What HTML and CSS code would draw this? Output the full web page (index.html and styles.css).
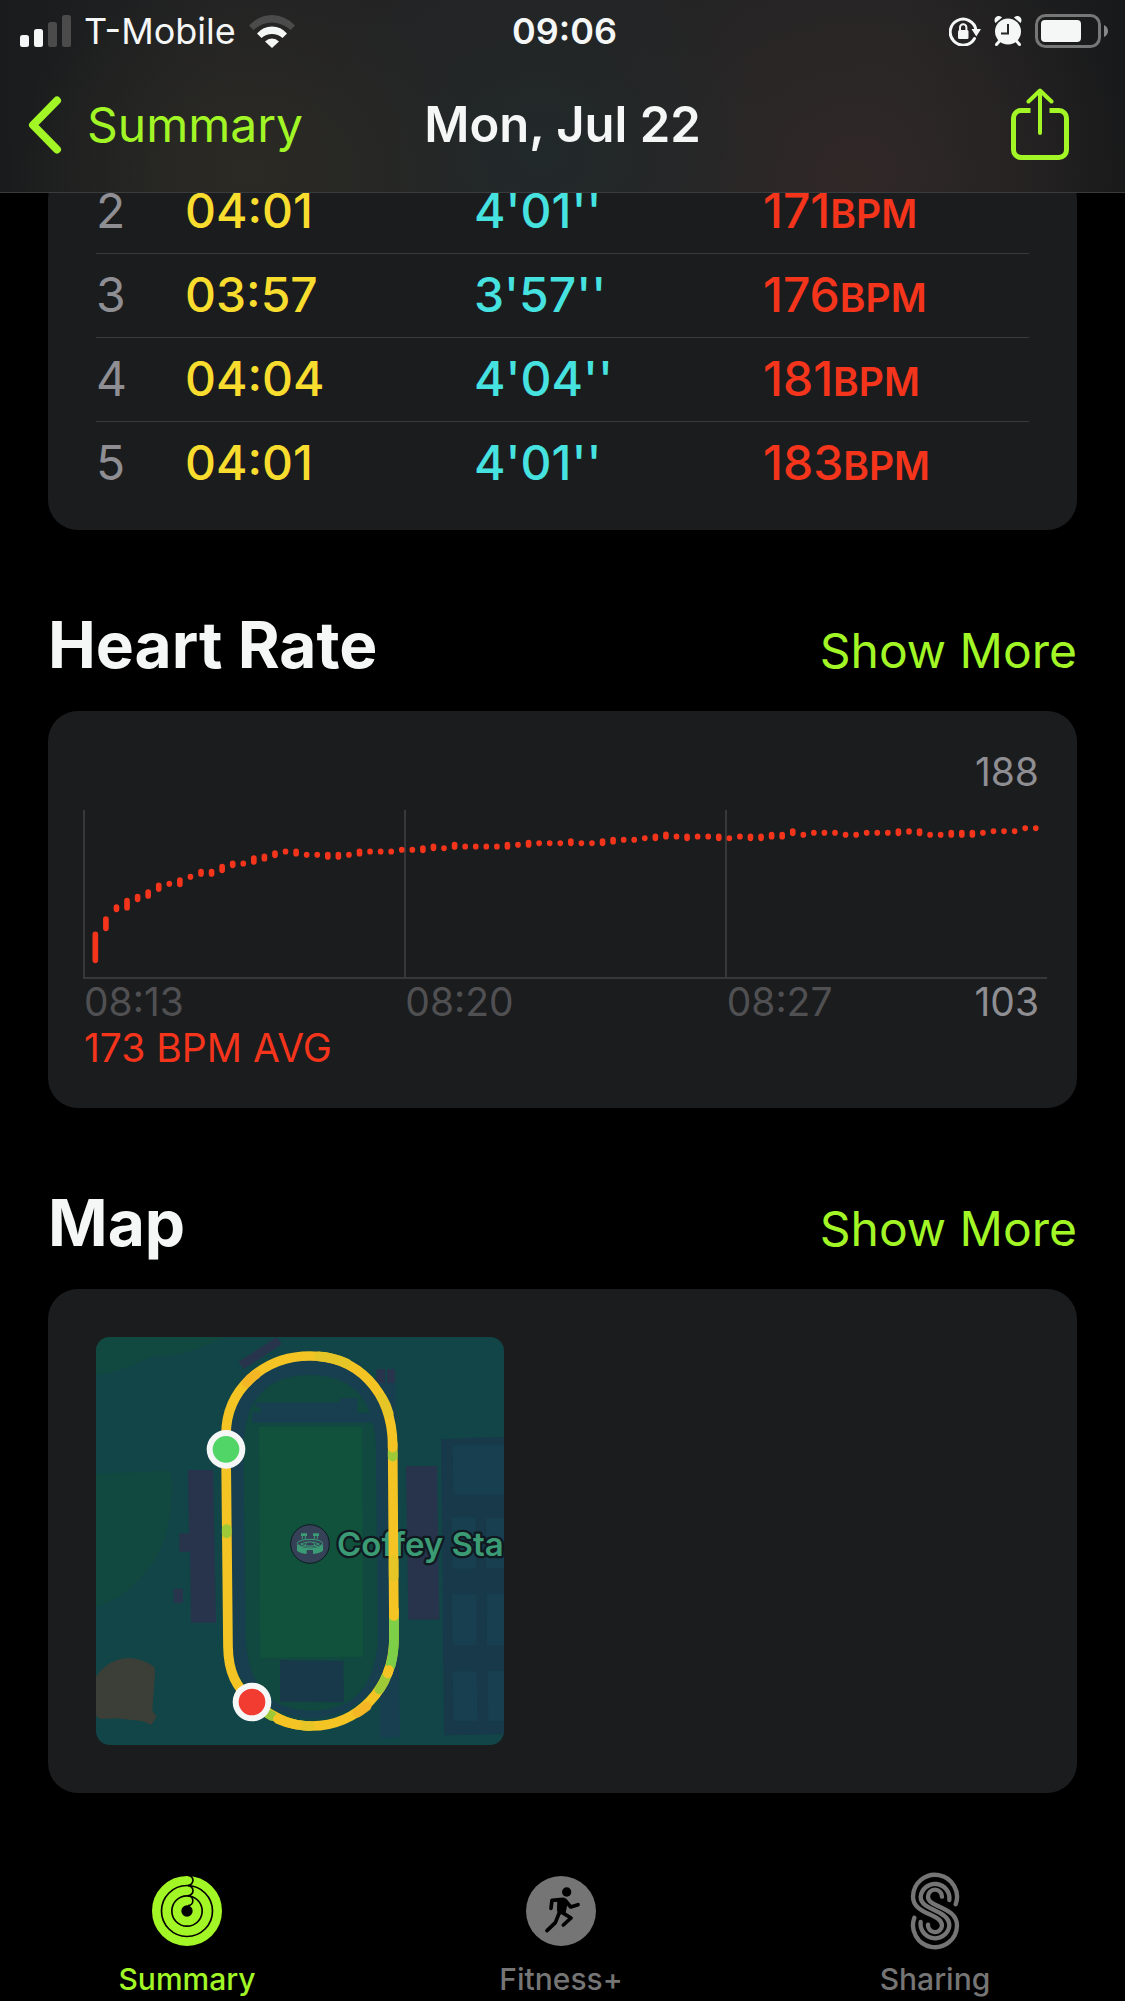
FILE: index.html
```html
<!DOCTYPE html>
<html lang="en">
<head>
<meta charset="utf-8">
<meta name="viewport" content="width=device-width, initial-scale=1">
<title>Mon, Jul 22</title>
<link rel="stylesheet" href="styles.css">
</head>
<body>
<header class="top">
  <div class="status">
    <div class="status-side">
      <svg class="signal" viewBox="0 0 51 32" aria-hidden="true">
        <rect x="0" y="20" width="9" height="12" rx="2.5"/>
        <rect x="14" y="14" width="9" height="18" rx="2.5"/>
        <rect class="faint" x="28" y="7" width="9" height="25" rx="2.5"/>
        <rect class="faint" x="42" y="0" width="9" height="32" rx="2.5"/>
      </svg>
      <span class="carrier">T-Mobile</span>
      <svg class="wifi" viewBox="0 0 46 33" aria-hidden="true">
        <path class="faint" d="M0 10.5Q10 0 23 0T46 10.500L41.500 15Q33 7.500 23 7.500T4.500 15Z"/>
        <path d="M8 18.500Q14 11.500 23 11.500T38 18.500L33.500 23Q29 19 23 19T12.500 23Z"/>
        <path d="M16 26.500Q19 23.500 23 23.500T30 26.500L23 33Z"/>
      </svg>
    </div>
    <time class="clock">09:06</time>
    <div class="status-side status-end">
      <svg class="lock" viewBox="0 0 32 30" aria-hidden="true">
        <path class="line" d="M25.500 22.500A13 13 0 1 1 27 14"/>
        <path d="M22.500 13H32L27.300 20.500Z"/>
        <rect x="9" y="14" width="10.500" height="9" rx="1.500"/>
        <path class="shackle" d="M11 15V11.500a3.200 3.200 0 0 1 6.400 0V15"/>
      </svg>
      <svg class="alarm" viewBox="0 0 28 30" aria-hidden="true">
        <circle cx="14" cy="15.500" r="13"/>
        <path class="leg" d="M5.500 25L2.500 28.500M22.500 25l3 3.500"/>
        <path d="M1.500 7A4 4 0 0 1 8 1.500ZM26.500 7A4 4 0 0 0 20 1.500Z"/>
        <path class="hand" d="M14 8V17.500H7"/>
      </svg>
      <svg class="battery" viewBox="0 0 74 34" aria-hidden="true">
        <rect class="case" x="1.500" y="1.500" width="63" height="31" rx="9"/>
        <rect x="6" y="6" width="40" height="22" rx="4"/>
        <path class="nub" d="M69 11q4 2 4 6t-4 6z"/>
      </svg>
    </div>
  </div>
  <div class="nav">
    <a class="back" href="#summary">
      <svg class="chevron" viewBox="0 0 34 58" aria-hidden="true"><path d="M29 4.500L5 29L29 53.500"/></svg>
      Summary
    </a>
    <h1 class="title">Mon, Jul 22</h1>
    <button class="share" type="button" aria-label="Share">
      <svg viewBox="0 0 58 72" aria-hidden="true"><path d="M19.500 22.500H10a7.500 7.500 0 0 0-7.500 7.500v32a7.500 7.500 0 0 0 7.500 7.500h38a7.500 7.500 0 0 0 7.500-7.500V30a7.500 7.500 0 0 0-7.500-7.500H38.500"/><path class="arrow" d="M29 45V3M17.500 13.500L29 2.500L40.500 13.500"/></svg>
    </button>
  </div>
</header>

<main class="content">
  <section class="card splits">
    <table aria-label="Splits">
      <colgroup><col class="col-index"><col class="col-value"><col class="col-value"><col></colgroup>
      <tbody>
        <tr><th scope="row">2</th><td class="time">04:01</td><td class="pace">4'01''</td><td class="rate">171<span class="unit">BPM</span></td></tr>
        <tr><th scope="row">3</th><td class="time">03:57</td><td class="pace">3'57''</td><td class="rate">176<span class="unit">BPM</span></td></tr>
        <tr><th scope="row">4</th><td class="time">04:04</td><td class="pace">4'04''</td><td class="rate">181<span class="unit">BPM</span></td></tr>
        <tr><th scope="row">5</th><td class="time">04:01</td><td class="pace">4'01''</td><td class="rate">183<span class="unit">BPM</span></td></tr>
      </tbody>
    </table>
  </section>

  <section>
    <div class="section-head">
      <h2>Heart Rate</h2>
      <a href="#heart-rate">Show More</a>
    </div>
    <div class="card heart">
      <p class="max">188</p>
      <svg class="chart" viewBox="0 0 2892 507" role="img" aria-label="Heart rate">
        <path class="grid" d="M3 0V504M966 0V504M1929 0V504M0 504H2892"/>
        <path class="beats" id="beats"/>
      </svg>
      <div class="axis">
        <span>08:13</span>
        <span>08:20</span>
        <span>08:27</span>
        <span class="min">103</span>
      </div>
      <p class="average">173 BPM AVG</p>
    </div>
  </section>

  <section>
    <div class="section-head">
      <h2>Map</h2>
      <a href="#map">Show More</a>
    </div>
    <div class="card map-card">
      <svg class="map" viewBox="48 51 1224 1224" role="img" aria-label="Route map">
        <rect x="48" y="51" width="1224" height="1224" fill="#114547"/>
        <path fill="#11483f" d="M48 51H430Q350 95 270 107H220Q140 150 48 167ZM48 461L272 452Q285 600 235 700Q170 820 48 862Z"/>
        <path fill="#3c3f37" d="M48 1070Q85 1015 150 1014Q195 1018 223 1042Q227 1055 224 1070L217 1172L230 1190L213 1215L190 1204L110 1195L65 1197Q52 1195 48 1185Z"/>
        <path fill="#17394a" d="M1083 358L1272 350V1243L1092 1246Z"/>
        <path fill="#173f50" d="M1118 376H1272V524H1120ZM1114 592H1187L1188 746H1118ZM1218 594H1272V745H1219ZM1115 823H1190V975H1118ZM1220 821H1272V975H1221ZM1118 1054H1190L1192 1203H1121ZM1223 1052H1272V1203H1225Z"/>
        <path fill="#173f50" d="M895 188H947V400H895ZM900 1000H956L960 1252H900Z"/>
        <path fill="#173f50" d="M438 375A250 262 0 0 1 938 375L942 955A250 262 0 0 1 444 955Z"/>
        <path fill="#11483f" d="M490 400Q488 165 689 165Q888 165 888 400L894 960Q880 1172 695 1172Q510 1172 497 960Z"/>
        <path fill="#173f50" d="M526 248H779V234H832V278H885V308H516V277H542V261H526Z"/>
        <path fill="#11523c" d="M537 321H846L850 1010L541 1013Z"/>
        <path fill="#17394a" d="M600 1020L790 1023L792 1147L600 1145Z"/>
        <path fill="#27344b" d="M475 126L590 51L606 72L492 147ZM889 147H915V189H889ZM921 147H945V189H921ZM324 450H399L408 908H333L330 695H298V640H327ZM280 806H309V849H282ZM978 438H1071L1078 899H985Z"/>
        <circle cx="690" cy="672" r="58" fill="#344157" stroke="#111a22" stroke-width="3"/>
        <g fill="#3b9b74">
          <path d="M663 640H681V648H663ZM699 640H717V648H699Z"/>
          <path d="M651 673V692Q658 699 680 702V690H699V702Q722 699 729 692V673Q715 685 690 685T651 673Z"/>
        </g>
        <g fill="none" stroke="#3b9b74" stroke-width="3">
          <path d="M667 648V658M676 648V658M703 648V658M712 648V658"/>
          <ellipse cx="690" cy="670" rx="38" ry="12"/>
          <path d="M662 672Q690 659 718 672M662 672Q690 685 718 672M680 666L674 679M700 666L706 679"/>
        </g>
        <text class="place" x="771" y="709">Coffey Stadium</text>
        <g class="route">
          <path d="M438 388V345C438 210 550 108 690 108C830 108 936 210 938 375L942 950C942 1110 830 1218 695 1218C640 1218 600 1206 516 1146C470 1100 445 1060 444 980L438 388"/>
          <path stroke="#e6c526" d="M716 109Q760 112 800 130M905 232Q920 255 926 280M941 720V770M659 1215Q680 1219 690 1218"/>
          <path stroke="#f4b624" d="M500 188Q510 175 528 163M832 1178Q845 1171 860 1159"/>
          <path stroke="#9fca38" d="M938 397V410M440 627V640M898 1108Q912 1090 918 1070M562 1180L576 1188"/>
          <path stroke="#7dcf47" d="M942 900V950Q942 1000 932 1036"/>
          <path d="M938 370V383M942 870V888M923 1060L926 1050M594 1197Q620 1209 650 1214"/>
        </g>
        <g stroke="#f5f6f6" stroke-width="18">
          <circle cx="438" cy="388" r="49" fill="#51d566"/>
          <circle cx="516" cy="1146" r="49" fill="#f23b31"/>
        </g>
      </svg>
    </div>
  </section>
</main>

<nav class="tabs" aria-label="Tabs">
  <a class="tab active" href="#summary">
    <svg viewBox="173 63 234 234" aria-hidden="true">
      <g fill="none" stroke="currentColor" stroke-width="26">
        <circle cx="290" cy="180" r="92"/>
        <circle cx="290" cy="180" r="61"/>
        <circle cx="290" cy="180" r="30"/>
      </g>
      <path fill="none" stroke="#000" stroke-width="5" d="M293 73a14 14 0 0 1 0 30M293 104a14 14 0 0 1 0 30M293 135a14 14 0 0 1 0 29"/>
    </svg>
    Summary
  </a>
  <a class="tab" href="#fitness">
    <svg viewBox="126 63 234 234" aria-hidden="true">
      <circle cx="243" cy="180" r="105" fill="currentColor"/>
      <circle cx="260" cy="123" r="14"/>
      <path d="M232 141H255L264 152L257 185L238 191L231 179Z"/>
      <g fill="none" stroke="#000" stroke-width="11" stroke-linecap="round" stroke-linejoin="round">
        <path d="M250 145L216 148L213 172M256 148L272 168L294 161M240 180L226 215L201 239M246 184L273 201L250 222"/>
      </g>
    </svg>
    Fitness+
  </a>
  <a class="tab" href="#sharing">
    <svg viewBox="112 64 234 234" aria-hidden="true">
      <g fill="none" stroke="currentColor" stroke-width="13" stroke-linecap="round">
        <path d="M291 161A66 66 0 1 0 163 138C163 192 250 188 250 225A21 21 0 1 1 208 222"/>
        <path d="M272 148A43 43 0 1 0 186 138C186 182 272 176 272 225A43 43 0 1 1 186 214"/>
        <path d="M250 138A21 21 0 1 0 208 138C208 172 295 166 295 225A66 66 0 1 1 167 201"/>
      </g>
    </svg>
    Sharing
  </a>
</nav>
<script src="chart.js"></script>
</body>
</html>
```
FILE: chart.js
```js
// Each sample is [top, bottom] of its bar in chart units.
const samples = [
  [365,459],[319,363],[283,306],[264,301],[252,276],[238,266],[218,245],[213,230],[202,231],[192,209],
  [177,200],[177,200],[162,189],[152,174],[152,169],[136,164],[131,154],[121,144],[116,133],[116,139],
  [126,143],[126,143],[126,149],[126,149],[126,143],[116,139],[116,133],[116,133],[116,133],[111,128],
  [111,128],[106,129],[101,123],[106,123],[96,119],[101,118],[101,118],[101,118],[101,118],[96,119],
  [96,113],[90,113],[91,108],[91,108],[91,108],[85,108],[91,108],[91,108],[85,108],[81,103],
  [81,98],[81,98],[76,93],[71,93],[65,88],[71,88],[71,93],[71,88],[71,88],[71,93],
  [76,93],[71,88],[71,93],[71,93],[66,88],[66,88],[55,78],[66,83],[60,77],[60,77],
  [60,77],[66,83],[66,83],[60,77],[60,77],[60,77],[55,78],[55,73],[55,78],[66,83],
  [66,83],[60,83],[60,83],[60,83],[60,77],[55,72],[55,72],[55,72],[46,63],[46,63]
];
const first = 37;
const step = 31.7;
const cap = 8;
document.getElementById("beats").setAttribute("d", samples.map(function (s, i) {
  return "M" + (first + i * step).toFixed(1) + " " + (s[0] + cap) + "V" + (s[1] - cap);
}).join(""));
```
FILE: styles.css
```css
* {
  box-sizing: border-box;
}

body {
  margin: 0;
  min-height: 100vh;
  display: flex;
  flex-direction: column;
  background: #000;
  color: #f5f6f6;
  font-family: Inter, "Liberation Sans", sans-serif;
}

h1, h2, p {
  margin: 0;
}

a {
  color: #a2f626;
  text-decoration: none;
}

svg {
  display: block;
  flex: none;
}

.top {
  position: sticky;
  top: 0;
  z-index: 1;
  padding-bottom: 4px;
  border-bottom: 1px solid #3a3b3c;
  background:
    radial-gradient(ellipse 240px 200px at 22% 90%, #2b2a24, transparent),
    radial-gradient(ellipse 240px 200px at 48% 80%, #22292a, transparent),
    radial-gradient(ellipse 280px 240px at 76% 90%, #302827, transparent),
    linear-gradient(90deg, #191b1c, #232324 20%, #242425 80%, #18191a);
}

.status {
  display: grid;
  grid-template-columns: 1fr auto 1fr;
  align-items: center;
  height: 62px;
  padding: 0 16px 0 20px;
  fill: #f5f6f6;
}

.status-side {
  display: flex;
  align-items: center;
  gap: 13px;
}

.status-end {
  justify-content: flex-end;
}

.carrier,
.clock {
  font-size: 36px;
  line-height: 40px;
}

.clock {
  font-weight: 600;
}

.signal { width: 51px; }
.wifi { width: 46px; }
.lock { width: 32px; }
.alarm { width: 28px; }
.battery { width: 74px; }

.faint {
  fill: #4b4b4b;
}

.lock .line {
  fill: none;
  stroke: #f5f6f6;
  stroke-width: 3;
  stroke-linecap: round;
}

.lock .shackle {
  fill: none;
  stroke: #f5f6f6;
  stroke-width: 2;
}

.alarm .leg {
  stroke: #f5f6f6;
  stroke-width: 3;
  stroke-linecap: round;
}

.alarm .hand {
  fill: none;
  stroke: #252526;
  stroke-width: 2;
}

.battery .case {
  fill: none;
  stroke: #777;
  stroke-width: 3;
}

.battery .nub {
  fill: #888;
}

.nav {
  display: grid;
  grid-template-columns: 1fr auto 1fr;
  align-items: center;
  height: 126px;
  padding: 0 28px;
}

.back {
  display: flex;
  align-items: center;
  gap: 25px;
  font-size: 48px;
  line-height: 60px;
}

.chevron {
  width: 34px;
  fill: none;
  stroke: currentColor;
  stroke-width: 8;
  stroke-linecap: round;
  stroke-linejoin: round;
}

.title {
  font-size: 49px;
  line-height: 60px;
  font-weight: 600;
}

.share {
  justify-self: end;
  width: 58px;
  margin: 0 28px 2px 0;
  padding: 0;
  border: 0;
  background: none;
  color: #a2f626;
}

.share svg {
  fill: none;
  stroke: currentColor;
  stroke-width: 5;
}

.share .arrow {
  stroke-width: 4;
  stroke-linecap: round;
  stroke-linejoin: round;
}

.content {
  flex: 1;
  padding: 0 48px;
}

.card {
  border-radius: 30px;
  background: #1b1c1e;
}

.splits {
  margin-top: -24px;
  padding: 0 48px 25px;
}

.splits table {
  width: 100%;
  border-collapse: collapse;
  table-layout: fixed;
}

.col-index { width: 89px; }
.col-value { width: 289px; }

.splits tr {
  height: 84px;
  border-bottom: 1px solid #3a3a3c;
}

.splits tr:last-child {
  border-bottom: 0;
}

.splits th,
.splits td {
  padding: 0;
  text-align: left;
  font-size: 48px;
  line-height: 60px;
  font-weight: 500;
}

.splits th {
  color: #8e8e93;
  font-weight: 400;
}

.splits .time { color: #f8dc2e; }
.splits .pace { color: #46e2e0; }
.splits .rate { color: #f4351c; }

.splits .unit {
  font-size: 39px;
  line-height: 40px;
  font-weight: 600;
}

.section-head {
  display: flex;
  justify-content: space-between;
  align-items: baseline;
  padding: 75px 0 26px;
}

.section-head h2 {
  font-size: 64px;
  line-height: 80px;
  font-weight: 700;
}

.section-head a {
  font-size: 48px;
  line-height: 60px;
}

.heart {
  padding: 36px 30px 37px 35px;
  font-size: 39px;
  line-height: 46px;
}

.max {
  padding: 2px 8px 15px 0;
  color: #8e8e93;
  text-align: right;
}

.chart {
  width: 100%;
}

.grid {
  fill: none;
  stroke: #38383a;
  stroke-width: 6;
}

.beats {
  fill: none;
  stroke: #f4351c;
  stroke-width: 17;
  stroke-linecap: round;
}

.axis {
  display: grid;
  grid-template-columns: 2fr 2fr 1fr 1fr;
  color: #505053;
}

.axis span {
  padding-left: 1px;
}

.axis .min {
  padding-right: 8px;
  color: #8e8e93;
  text-align: right;
}

.average {
  padding-left: 1px;
  color: #f4351c;
}

.map-card {
  padding: 48px;
}

.map {
  width: 408px;
  border-radius: 14px;
}

.place {
  fill: #3b9b74;
  stroke: #101820;
  stroke-width: 14;
  stroke-linejoin: round;
  paint-order: stroke;
  font-size: 99px;
  font-weight: 600;
}

.route {
  fill: none;
  stroke: #f4c425;
  stroke-width: 29;
  stroke-linecap: round;
  stroke-linejoin: round;
}

.tabs {
  display: grid;
  grid-template-columns: repeat(3, 1fr);
  padding: 78px 3px 5px 0;
}

.tab {
  display: flex;
  flex-direction: column;
  align-items: center;
  gap: 12px;
  color: #757575;
  font-size: 30px;
  line-height: 34px;
  font-weight: 500;
}

.tab svg {
  width: 78px;
}

.tab.active {
  color: #a2f626;
}
```
